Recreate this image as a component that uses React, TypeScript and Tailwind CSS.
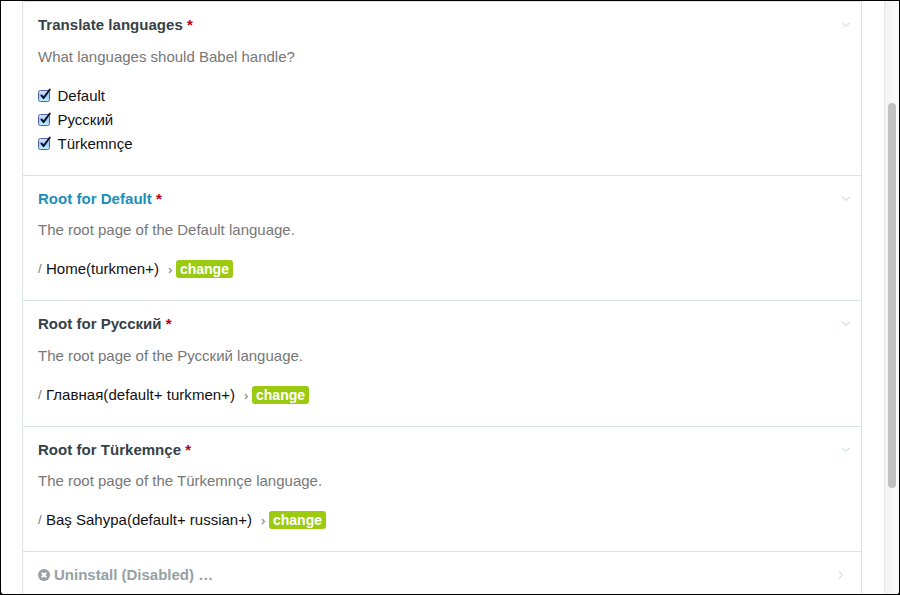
import type { ReactNode } from "react";

function Chevron({ className }: { className: string }) {
  return (
    <svg className={className} width="10" height="10" viewBox="0 0 10 10" fill="none" stroke="#cfdee1" strokeWidth="1.1">
      <path d="M1.4 3 L5 6.3 L8.6 3" />
    </svg>
  );
}

function Section({ title, active, description, height, gap, children }: {
  title: string;
  active?: boolean;
  description: string;
  height: string;
  gap: string;
  children: ReactNode;
}) {
  return (
    <section className={`shrink-0 border-t border-[#d9e4e6] px-[15px] pt-[11px] ${height}`}>
      <div className="flex items-start justify-between">
        <h2 className={`font-bold leading-6 tracking-[0.03px] ${active ? "text-[#1b8fb9]" : "text-[#354248]"}`}>
          {title} <span className="text-[#b5001c]">*</span>
        </h2>
        <Chevron className="-mr-[5px] mt-[7px]" />
      </div>
      <p className={`leading-6 text-[#777] ${gap}`}>{description}</p>
      {children}
    </section>
  );
}

function Checkbox({ label }: { label: string }) {
  return (
    <label className="flex h-6 items-center">
      <svg width="14" height="16" viewBox="0 0 14 16" className="mr-[5.5px]">
        <defs>
          <linearGradient id="box" x1="0" y1="0" x2="0" y2="1">
            <stop offset="0" stopColor="#dbeaf9" />
            <stop offset=".5" stopColor="#9fcaf0" />
            <stop offset="1" stopColor="#c4f0ff" />
          </linearGradient>
        </defs>
        <rect x=".5" y="2.5" width="11" height="11" rx="2" fill="url(#box)" stroke="#5561a3" />
        <path d="M3 6.8 L5.6 9.8 L12.2 1" fill="none" stroke="#05122e" strokeWidth="2" />
      </svg>
      {label}
    </label>
  );
}

function PageRoot({ page, spacing }: { page: string; spacing: string }) {
  return (
    <div className="mt-[15px] flex h-6 items-center">
      <span className="w-2 text-[13px] text-[#777]">/</span>
      <span className={spacing}>{page}</span>
      <svg width="5" height="7" viewBox="0 0 5 7" className="ml-[9px] mt-[2px]" fill="none" stroke="#999" strokeWidth="1.4">
        <path d="M1 1 L3.4 3.5 L1 6" />
      </svg>
      <button className="ml-[3px] h-[18px] w-[57px] rounded-[3px] bg-[#9bca10] text-center text-[14px] leading-[18px] font-bold text-white">
        change
      </button>
    </div>
  );
}

export default function App() {
  return (
    <div className="h-[595px] w-[900px] overflow-hidden bg-black p-px font-['Liberation_Sans',Arial,sans-serif] text-[15px] text-[#111]">
      <div className="flex h-[593px] overflow-hidden rounded-b-[3px] bg-white">
        <main className="ml-[21px] flex h-[593px] w-[840px] shrink-0 flex-col overflow-hidden border-x border-[#d9e4e6]">
          <Section title="Translate languages" description="What languages should Babel handle?" height="h-[174px]" gap="mt-2">
            <div className="mt-[15px]">
              <Checkbox label="Default" />
              <Checkbox label="Русский" />
              <Checkbox label="Türkemnçe" />
            </div>
          </Section>
          <Section title="Root for Default" active description="The root page of the Default language." height="h-[125px]" gap="mt-[7px]">
            <PageRoot page="Home(turkmen+)" spacing="tracking-normal" />
          </Section>
          <Section title="Root for Русский" description="The root page of the Русский language." height="h-[126px]" gap="mt-2">
            <PageRoot page="Главная(default+ turkmen+)" spacing="tracking-[0.04px]" />
          </Section>
          <Section title="Root for Türkemnçe" description="The root page of the Türkemnçe language." height="h-[125px]" gap="mt-[7px]">
            <PageRoot page="Baş Sahypa(default+ russian+)" spacing="tracking-normal" />
          </Section>
          <section className="flex h-[60px] shrink-0 items-start border-t border-[#d9e4e6] px-[15px] pt-[11px]">
            <svg width="12" height="12" viewBox="0 0 12 12" className="mt-[6px] mr-[4px]">
              <circle cx="6" cy="6" r="6" fill="#96a1a4" />
              <path d="M3.8 3.8 L8.2 8.2 M8.2 3.8 L3.8 8.2" stroke="#fff" strokeWidth="2" />
            </svg>
            <h2 className="grow font-bold leading-6 text-[#96a1a4]">Uninstall (Disabled) …</h2>
            <Chevron className="mt-[7px] -rotate-90" />
          </section>
        </main>
        <aside className="ml-[22px] h-full w-[15px] shrink-0 border-l border-[#e7e7e7] bg-linear-to-r from-[#f2f2f2] to-[#fdfdfd] pl-[3px] pt-[102px]">
          <div className="h-[385px] w-2 rounded-full bg-[#c1c1c1]" />
        </aside>
      </div>
    </div>
  );
}
